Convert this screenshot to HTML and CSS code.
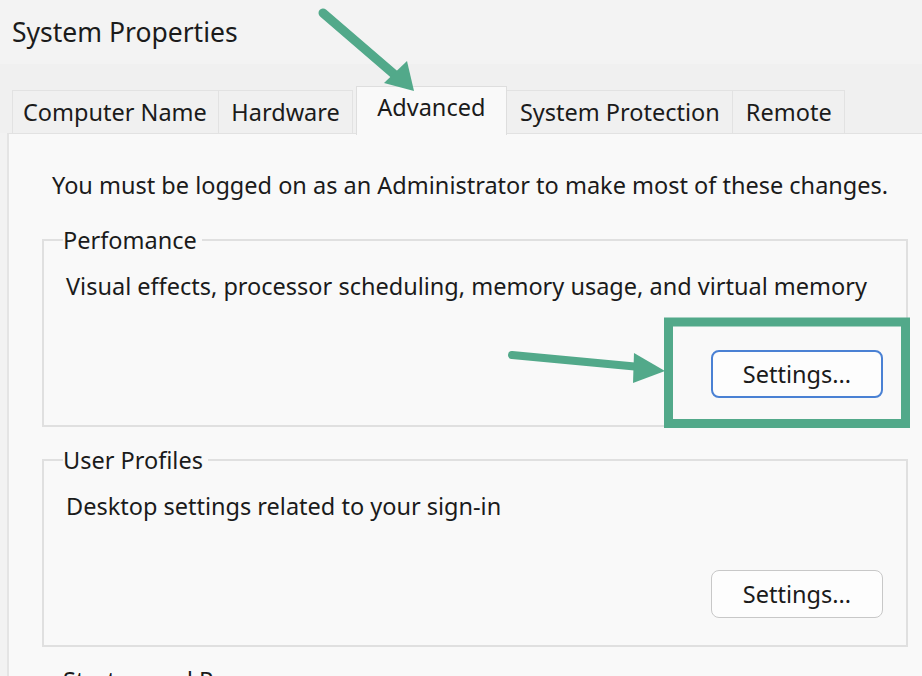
FILE: index.html
```html
<!DOCTYPE html>
<html>
<head>
<meta charset="utf-8">
<link rel="stylesheet" href="styles.css">
</head>
<body>
<div class="window">
  <div class="titlebar"><span class="title">System Properties</span></div>
  <div class="tabs">
    <div class="tab first">Computer Name</div>
    <div class="tab">Hardware</div>
    <div class="tab active">Advanced</div>
    <div class="tab">System Protection</div>
    <div class="tab">Remote</div>
  </div>
  <div class="panel">
    <p class="note">You must be logged on as an Administrator to make most of these changes.</p>
    <fieldset class="group">
      <legend>Perfomance</legend>
      <p class="desc">Visual effects, processor scheduling, memory usage, and virtual memory</p>
      <div class="actions"><button class="btn focused">Settings...</button></div>
    </fieldset>
    <fieldset class="group">
      <legend>User Profiles</legend>
      <p class="desc">Desktop settings related to your sign-in</p>
      <div class="actions"><button class="btn">Settings...</button></div>
    </fieldset>
    <fieldset class="group">
      <legend>Startup and Recovery</legend>
    </fieldset>
  </div>
</div>
<svg class="annot" width="922" height="676" viewBox="0 0 922 676">
  <line x1="323" y1="13" x2="395" y2="75" stroke="#52a98a" stroke-width="9" stroke-linecap="round"/>
  <polygon points="384,83 407,61 414,91" fill="#52a98a"/>
  <line x1="512" y1="355" x2="640" y2="367" stroke="#52a98a" stroke-width="8" stroke-linecap="round"/>
  <polygon points="634,353 633,383 665,371" fill="#52a98a"/>
  <rect x="668.5" y="322" width="237" height="101.5" fill="none" stroke="#52a98a" stroke-width="9"/>
</svg>
</body>
</html>
```
FILE: styles.css
```css
html, body {
  margin: 0;
  padding: 0;
  background: #f2f2f2;
  overflow: hidden;
}
body {
  width: 922px;
  height: 676px;
  position: relative;
  font-family: "Noto Sans", "Open Sans", sans-serif;
  color: #1b1b1b;
}
.window {
  display: flex;
  flex-direction: column;
  height: 676px;
  overflow: hidden;
}
.titlebar {
  height: 64px;
  flex: none;
  padding-left: 12px;
  display: flex;
  align-items: center;
  background: #f3f3f3;
}
.title {
  font-size: 26.5px;
  margin-top: -1px;
}
.tabs {
  display: flex;
  align-items: flex-end;
  padding-left: 12px;
  background: #f0f0f0;
  height: 69px;
  flex: none;
  box-sizing: border-box;
  position: relative;
  z-index: 1;
}
.tab {
  height: 43px;
  box-sizing: border-box;
  padding: 0 12.5px 0 12.5px;
  display: flex;
  align-items: center;
  font-size: 23.5px;
  background: #f0f0f0;
  border: 1px solid #e2e2e2;
  border-bottom: none;
}
.tab.first {
  padding: 0 11px 0 10px;
}
.tab + .tab { border-left: none; }
.tab.active {
  height: 49px;
  background: #f9f9f9;
  border: 1px solid #dedede;
  border-bottom: none;
  margin: 0 0 -2px 3px;
  padding: 0 21px 8px 20px;
}
.panel {
  flex: none;
  margin-left: 7px;
  background: #f9f9f9;
  border-left: 2px solid #e4e4e4;
  border-top: 1px solid #e2e2e2;
  padding: 36px 0 0 33px;
  height: 600px;
  box-sizing: border-box;
}
.note {
  margin: 0 0 25px 10px;
  font-size: 23.5px;
  line-height: 30px;
}
.group {
  width: 866px;
  box-sizing: border-box;
  margin: 0 0 18px 0;
  padding: 0 23px 27px 22px;
  border: 2px solid #e0e0e0;
  min-width: 0;
}
.group legend {
  padding: 0 5px 0 0;
  margin-left: -3px;
  font-size: 23.5px;
  line-height: 30px;
}
.desc {
  margin: 16px 0 0 0;
  font-size: 23.5px;
  line-height: 30px;
}
.actions {
  display: flex;
  justify-content: flex-end;
  margin-top: 49px;
}
.btn {
  width: 172px;
  height: 48px;
  border: 1.5px solid #c8c8c8;
  border-radius: 8px;
  background: #fdfdfd;
  font-family: "Noto Sans", "Open Sans", sans-serif;
  font-size: 23.5px;
  color: #1b1b1b;
  padding: 0;
}
.btn.focused {
  border: 2px solid #4a81d4;
}
.annot {
  position: absolute;
  left: 0;
  top: 0;
  pointer-events: none;
  z-index: 5;
}
```
